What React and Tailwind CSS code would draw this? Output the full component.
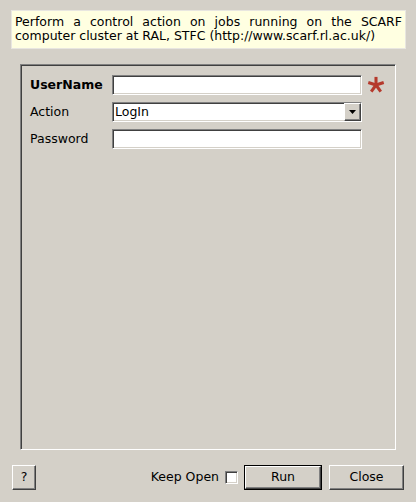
export default function App() {
  const sunken =
    "border border-t-[#808080] border-l-[#808080] border-b-white border-r-white shadow-[inset_1px_1px_0_#404040,inset_-1px_-1px_0_#d4d0c8]";
  const raised =
    "border border-t-white border-l-white border-b-[#404040] border-r-[#404040] shadow-[inset_-1px_-1px_0_#808080]";

  return (
    <div
      className="w-[416px] h-[502px] bg-[#d4d0c8] flex flex-col text-[12.5px] text-black"
      style={{ fontFamily: "'DejaVu Sans', sans-serif" }}
    >
      {/* Description */}
      <div className="mt-[10px] ml-[11px] w-[395px] h-[39px] bg-[#ffffe1] border border-[#e8e6e0] px-[3px] pt-[4px] leading-[14px]">
        <div className="text-justify [text-align-last:justify]">
          Perform a control action on jobs running on the SCARF
        </div>
        <div>computer cluster at RAL, STFC (http://www.scarf.rl.ac.uk/)</div>
      </div>

      {/* Form panel */}
      <div className={`mt-[15px] ml-[20px] w-[376px] h-[386px] ${sunken} pt-[10px] pl-[9px] flex flex-col gap-[7px]`}>
        <div className="flex items-center h-[20px]">
          <span className="w-[82px] font-bold">UserName</span>
          <div className={`w-[250px] h-[20px] bg-white ${sunken}`} />
          <svg width="18" height="18" viewBox="-10 -10 20 20" className="ml-[5px]">
            {[0, 72, 144, 216, 288].map((a) => (
              <line
                key={a}
                x1="0"
                y1="0"
                x2={9 * Math.sin((a * Math.PI) / 180)}
                y2={-9 * Math.cos((a * Math.PI) / 180)}
                stroke="#b5392c"
                strokeWidth="3.4"
              />
            ))}
          </svg>
        </div>
        <div className="flex items-center h-[20px]">
          <span className="w-[82px]">Action</span>
          <div className={`w-[250px] h-[20px] bg-white ${sunken} flex items-center`}>
            <span className="flex-1 pl-[2px]">LogIn</span>
            <div className={`w-[17px] h-[18px] bg-[#d4d0c8] ${raised} flex items-center justify-center`}>
              <svg width="7" height="4" viewBox="0 0 7 4">
                <polygon points="0,0 7,0 3.5,4" fill="black" />
              </svg>
            </div>
          </div>
        </div>
        <div className="flex items-center h-[20px]">
          <span className="w-[82px]">Password</span>
          <div className={`w-[250px] h-[20px] bg-white ${sunken}`} />
        </div>
      </div>

      {/* Bottom bar */}
      <div className="mt-[15px] mx-[12px] flex items-center h-[25px]">
        <button className={`w-[24px] h-[25px] bg-[#d4d0c8] ${raised} flex items-center justify-center`}>
          ?
        </button>
        <div className="flex-1" />
        <span className="mr-[6px]">Keep Open</span>
        <div className={`w-[13px] h-[13px] bg-white ${sunken} mr-[6px]`} />
        <div className="border border-black mr-[7px]">
          <button className={`w-[76px] h-[23px] bg-[#d4d0c8] ${raised} flex items-center justify-center`}>
            Run
          </button>
        </div>
        <button className={`w-[75px] h-[25px] bg-[#d4d0c8] ${raised} flex items-center justify-center`}>
          Close
        </button>
      </div>
    </div>
  );
}
